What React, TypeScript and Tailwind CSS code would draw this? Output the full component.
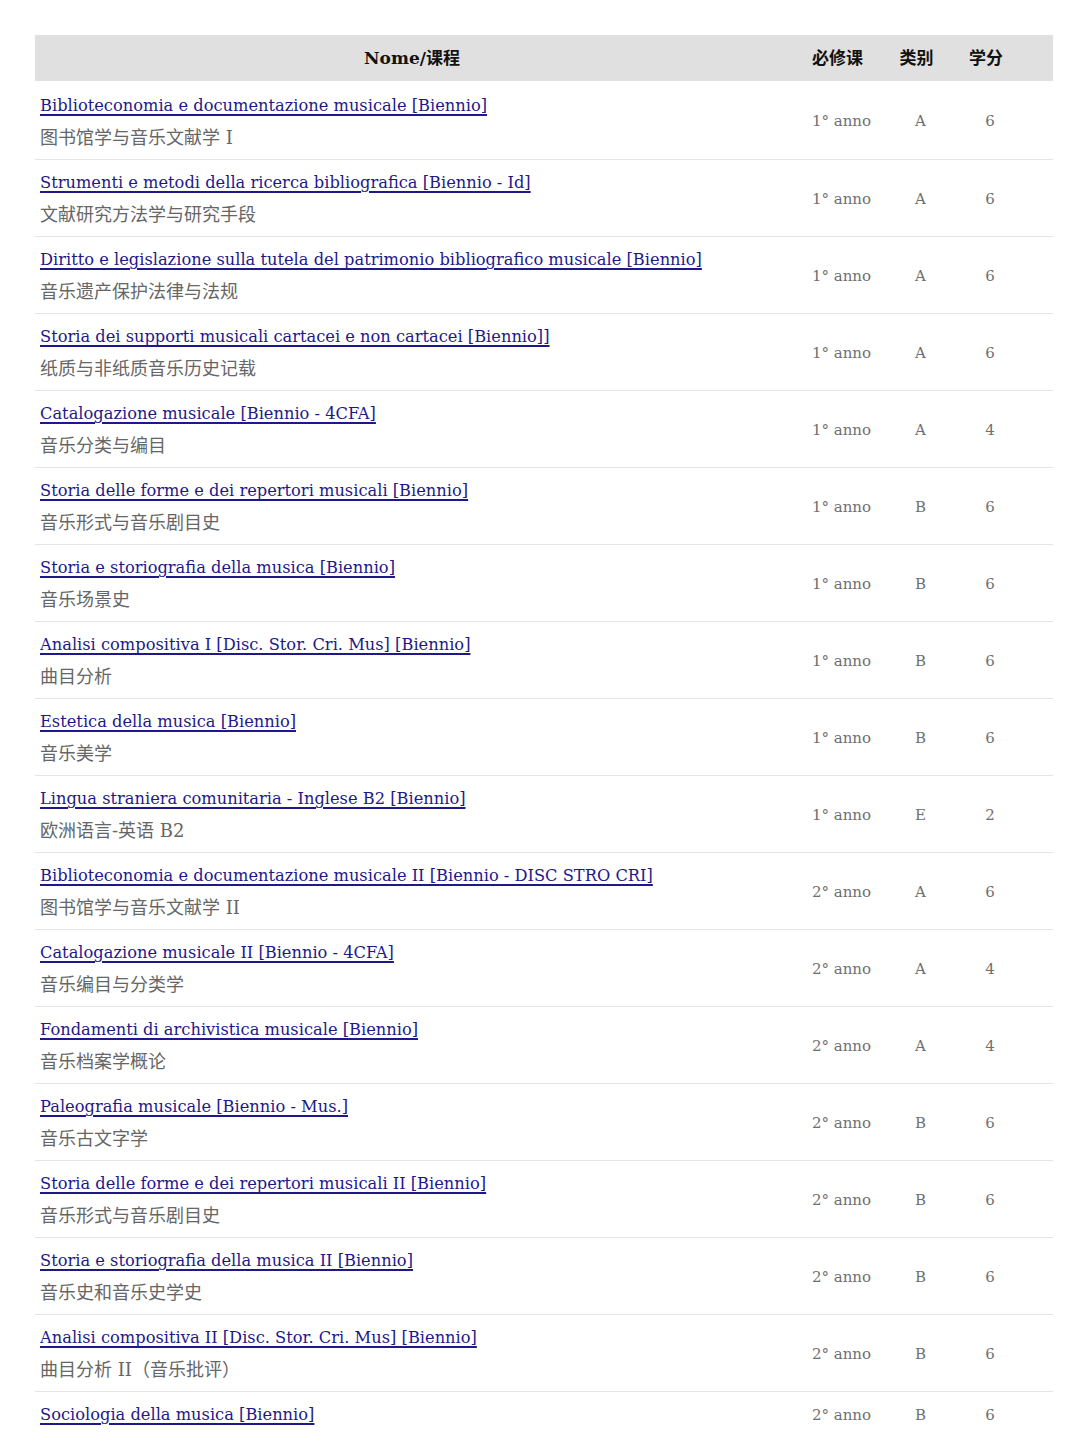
import React from 'react';

interface Course {
  name: string;
  zh?: string;
  year: string;
  type: string;
  credits: number;
}

const courses: Course[] = [
  { name: 'Biblioteconomia e documentazione musicale [Biennio]', zh: '图书馆学与音乐文献学 I', year: '1° anno', type: 'A', credits: 6 },
  { name: 'Strumenti e metodi della ricerca bibliografica [Biennio - Id]', zh: '文献研究方法学与研究手段', year: '1° anno', type: 'A', credits: 6 },
  { name: 'Diritto e legislazione sulla tutela del patrimonio bibliografico musicale [Biennio]', zh: '音乐遗产保护法律与法规', year: '1° anno', type: 'A', credits: 6 },
  { name: 'Storia dei supporti musicali cartacei e non cartacei [Biennio]]', zh: '纸质与非纸质音乐历史记载', year: '1° anno', type: 'A', credits: 6 },
  { name: 'Catalogazione musicale [Biennio - 4CFA]', zh: '音乐分类与编目', year: '1° anno', type: 'A', credits: 4 },
  { name: 'Storia delle forme e dei repertori musicali [Biennio]', zh: '音乐形式与音乐剧目史', year: '1° anno', type: 'B', credits: 6 },
  { name: 'Storia e storiografia della musica [Biennio]', zh: '音乐场景史', year: '1° anno', type: 'B', credits: 6 },
  { name: 'Analisi compositiva I [Disc. Stor. Cri. Mus] [Biennio]', zh: '曲目分析', year: '1° anno', type: 'B', credits: 6 },
  { name: 'Estetica della musica [Biennio]', zh: '音乐美学', year: '1° anno', type: 'B', credits: 6 },
  { name: 'Lingua straniera comunitaria - Inglese B2 [Biennio]', zh: '欧洲语言-英语 B2', year: '1° anno', type: 'E', credits: 2 },
  { name: 'Biblioteconomia e documentazione musicale II [Biennio - DISC STRO CRI]', zh: '图书馆学与音乐文献学 II', year: '2° anno', type: 'A', credits: 6 },
  { name: 'Catalogazione musicale II [Biennio - 4CFA]', zh: '音乐编目与分类学', year: '2° anno', type: 'A', credits: 4 },
  { name: 'Fondamenti di archivistica musicale [Biennio]', zh: '音乐档案学概论', year: '2° anno', type: 'A', credits: 4 },
  { name: 'Paleografia musicale [Biennio - Mus.]', zh: '音乐古文字学', year: '2° anno', type: 'B', credits: 6 },
  { name: 'Storia delle forme e dei repertori musicali II [Biennio]', zh: '音乐形式与音乐剧目史', year: '2° anno', type: 'B', credits: 6 },
  { name: 'Storia e storiografia della musica II [Biennio]', zh: '音乐史和音乐史学史', year: '2° anno', type: 'B', credits: 6 },
  { name: 'Analisi compositiva II [Disc. Stor. Cri. Mus] [Biennio]', zh: '曲目分析 II（音乐批评）', year: '2° anno', type: 'B', credits: 6 },
  { name: 'Sociologia della musica [Biennio]', year: '2° anno', type: 'B', credits: 6 },
];

export default function App() {
  return (
    <div className="min-h-[1452px] bg-white px-[35px] pt-[35px] font-['DejaVu_Serif','Noto_Sans_CJK_SC',serif] text-[15px]">
      <table className="w-[1018px] table-fixed border-collapse">
        <colgroup>
          <col className="w-[762px]" />
          <col className="w-[89px]" />
          <col className="w-[69px]" />
          <col className="w-[70px]" />
          <col className="w-[28px]" />
        </colgroup>
        <thead>
          {/* Header row */}
          <tr className="h-[46px] bg-[#e0e0e0] text-[17px] font-bold text-[#111]">
            <th className="pt-[2px] pr-2 text-center">Nome/课程</th>
            <th className="pt-[2px] pr-2 text-center">必修课</th>
            <th className="pt-[2px] pr-2 text-center">类别</th>
            <th className="pt-[2px] pr-2 text-center">学分</th>
            <th></th>
          </tr>
        </thead>
        <tbody>
          {courses.map((c, i) => (
            <tr key={c.name} className="border-b border-[#e4e4e4] last:border-b-0">
              <td className={`px-[5px] pb-[6px] ${i === 0 ? 'pt-[10px]' : 'pt-[8px]'}`}>
                <a
                  href="#"
                  className="block truncate text-[16.25px] leading-[30px] text-[#1e198a] underline decoration-[1.5px] underline-offset-[3px]"
                >
                  {c.name}
                </a>
                {c.zh && <div className="mt-[2px] text-[18px] leading-[30px] text-[#666]">{c.zh}</div>}
              </td>
              <td className="pt-[3px] text-center align-middle text-[#6f6f6f]">{c.year}</td>
              <td className="pt-[3px] text-center align-middle text-[#6f6f6f]">{c.type}</td>
              <td className="pt-[3px] text-center align-middle text-[#6f6f6f]">{c.credits}</td>
              <td></td>
            </tr>
          ))}
        </tbody>
      </table>
    </div>
  );
}
